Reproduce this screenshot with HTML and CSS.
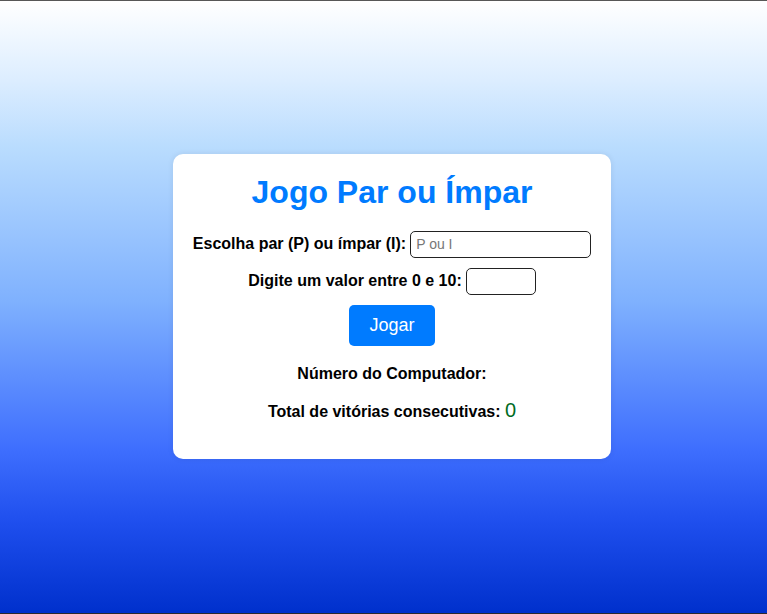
FILE: index.html
```html
<!DOCTYPE html>
<html lang="pt-BR">
<head>
<meta charset="utf-8">
<title>Jogo Par ou Ímpar</title>
<link rel="stylesheet" href="styles.css">
</head>
<body>
<div class="page">
  <div class="card">
    <h1 class="title">Jogo Par ou Ímpar</h1>
    <div class="row">
      <label class="label" for="escolha">Escolha par (P) ou ímpar (I):</label>
      <input class="field field-wide" id="escolha" type="text" placeholder="P ou I">
    </div>
    <div class="row">
      <label class="label" for="valor">Digite um valor entre 0 e 10:</label>
      <input class="field field-small" id="valor" type="text">
    </div>
    <div class="row">
      <button class="btn" type="button">Jogar</button>
    </div>
    <p class="info first">Número do Computador: <span class="comp"></span></p>
    <p class="info">Total de vitórias consecutivas: <span class="wins">0</span></p>
  </div>
</div>
</body>
</html>
```
FILE: styles.css
```css
html, body {
  margin: 0;
  padding: 0;
}
body {
  font-family: "Liberation Sans", Arial, sans-serif;
}
.page {
  box-sizing: border-box;
  height: 614px;
  border-top: 1px solid #575757;
  border-bottom: 1px solid #2a2a30;
  background: linear-gradient(to bottom,
    #ffffff 0%,
    #dcedff 13%,
    #b9dcfe 24%,
    #7fb1fe 49%,
    #3f6ffe 73%,
    #1f4fee 85%,
    #0030cc 100%);
  display: flex;
  align-items: center;
  justify-content: center;
  padding-left: 17px;
  padding-bottom: 2px;
}
.card {
  width: 438px;
  box-sizing: border-box;
  background: #ffffff;
  border-radius: 10px;
  padding: 20px 20px 21px;
  text-align: center;
  box-shadow: 0 0 6px rgba(0, 0, 0, 0.08);
}
.title {
  margin: 0 0 20px;
  font-size: 32px;
  font-weight: bold;
  color: #007bff;
  line-height: 37px;
}
.row {
  display: flex;
  justify-content: center;
  align-items: center;
  gap: 4px;
  margin-bottom: 10px;
}
.label {
  flex-shrink: 0;
  white-space: nowrap;
  font-size: 16px;
  font-weight: bold;
  color: #000;
}
.field {
  flex-shrink: 0;
  box-sizing: border-box;
  height: 27px;
  padding: 3px 5px;
  border: 1px solid #222;
  border-radius: 5px;
  font-family: "Liberation Sans", Arial, sans-serif;
  font-size: 14px;
  background: #fff;
  outline: none;
}
.field::placeholder {
  color: #777;
}
.field-wide {
  width: 181px;
}
.field-small {
  width: 70px;
}
.btn {
  height: 41px;
  padding: 0 20px;
  border: none;
  border-radius: 5px;
  background: #007bff;
  color: #fff;
  font-family: "Liberation Sans", Arial, sans-serif;
  font-size: 18px;
  cursor: pointer;
}
.info {
  margin: 16px 0;
  font-size: 16px;
  font-weight: bold;
  color: #000;
}
.info.first {
  margin-top: 19px;
}
.wins {
  font-size: 20px;
  font-weight: normal;
  color: #006b1f;
}
```
